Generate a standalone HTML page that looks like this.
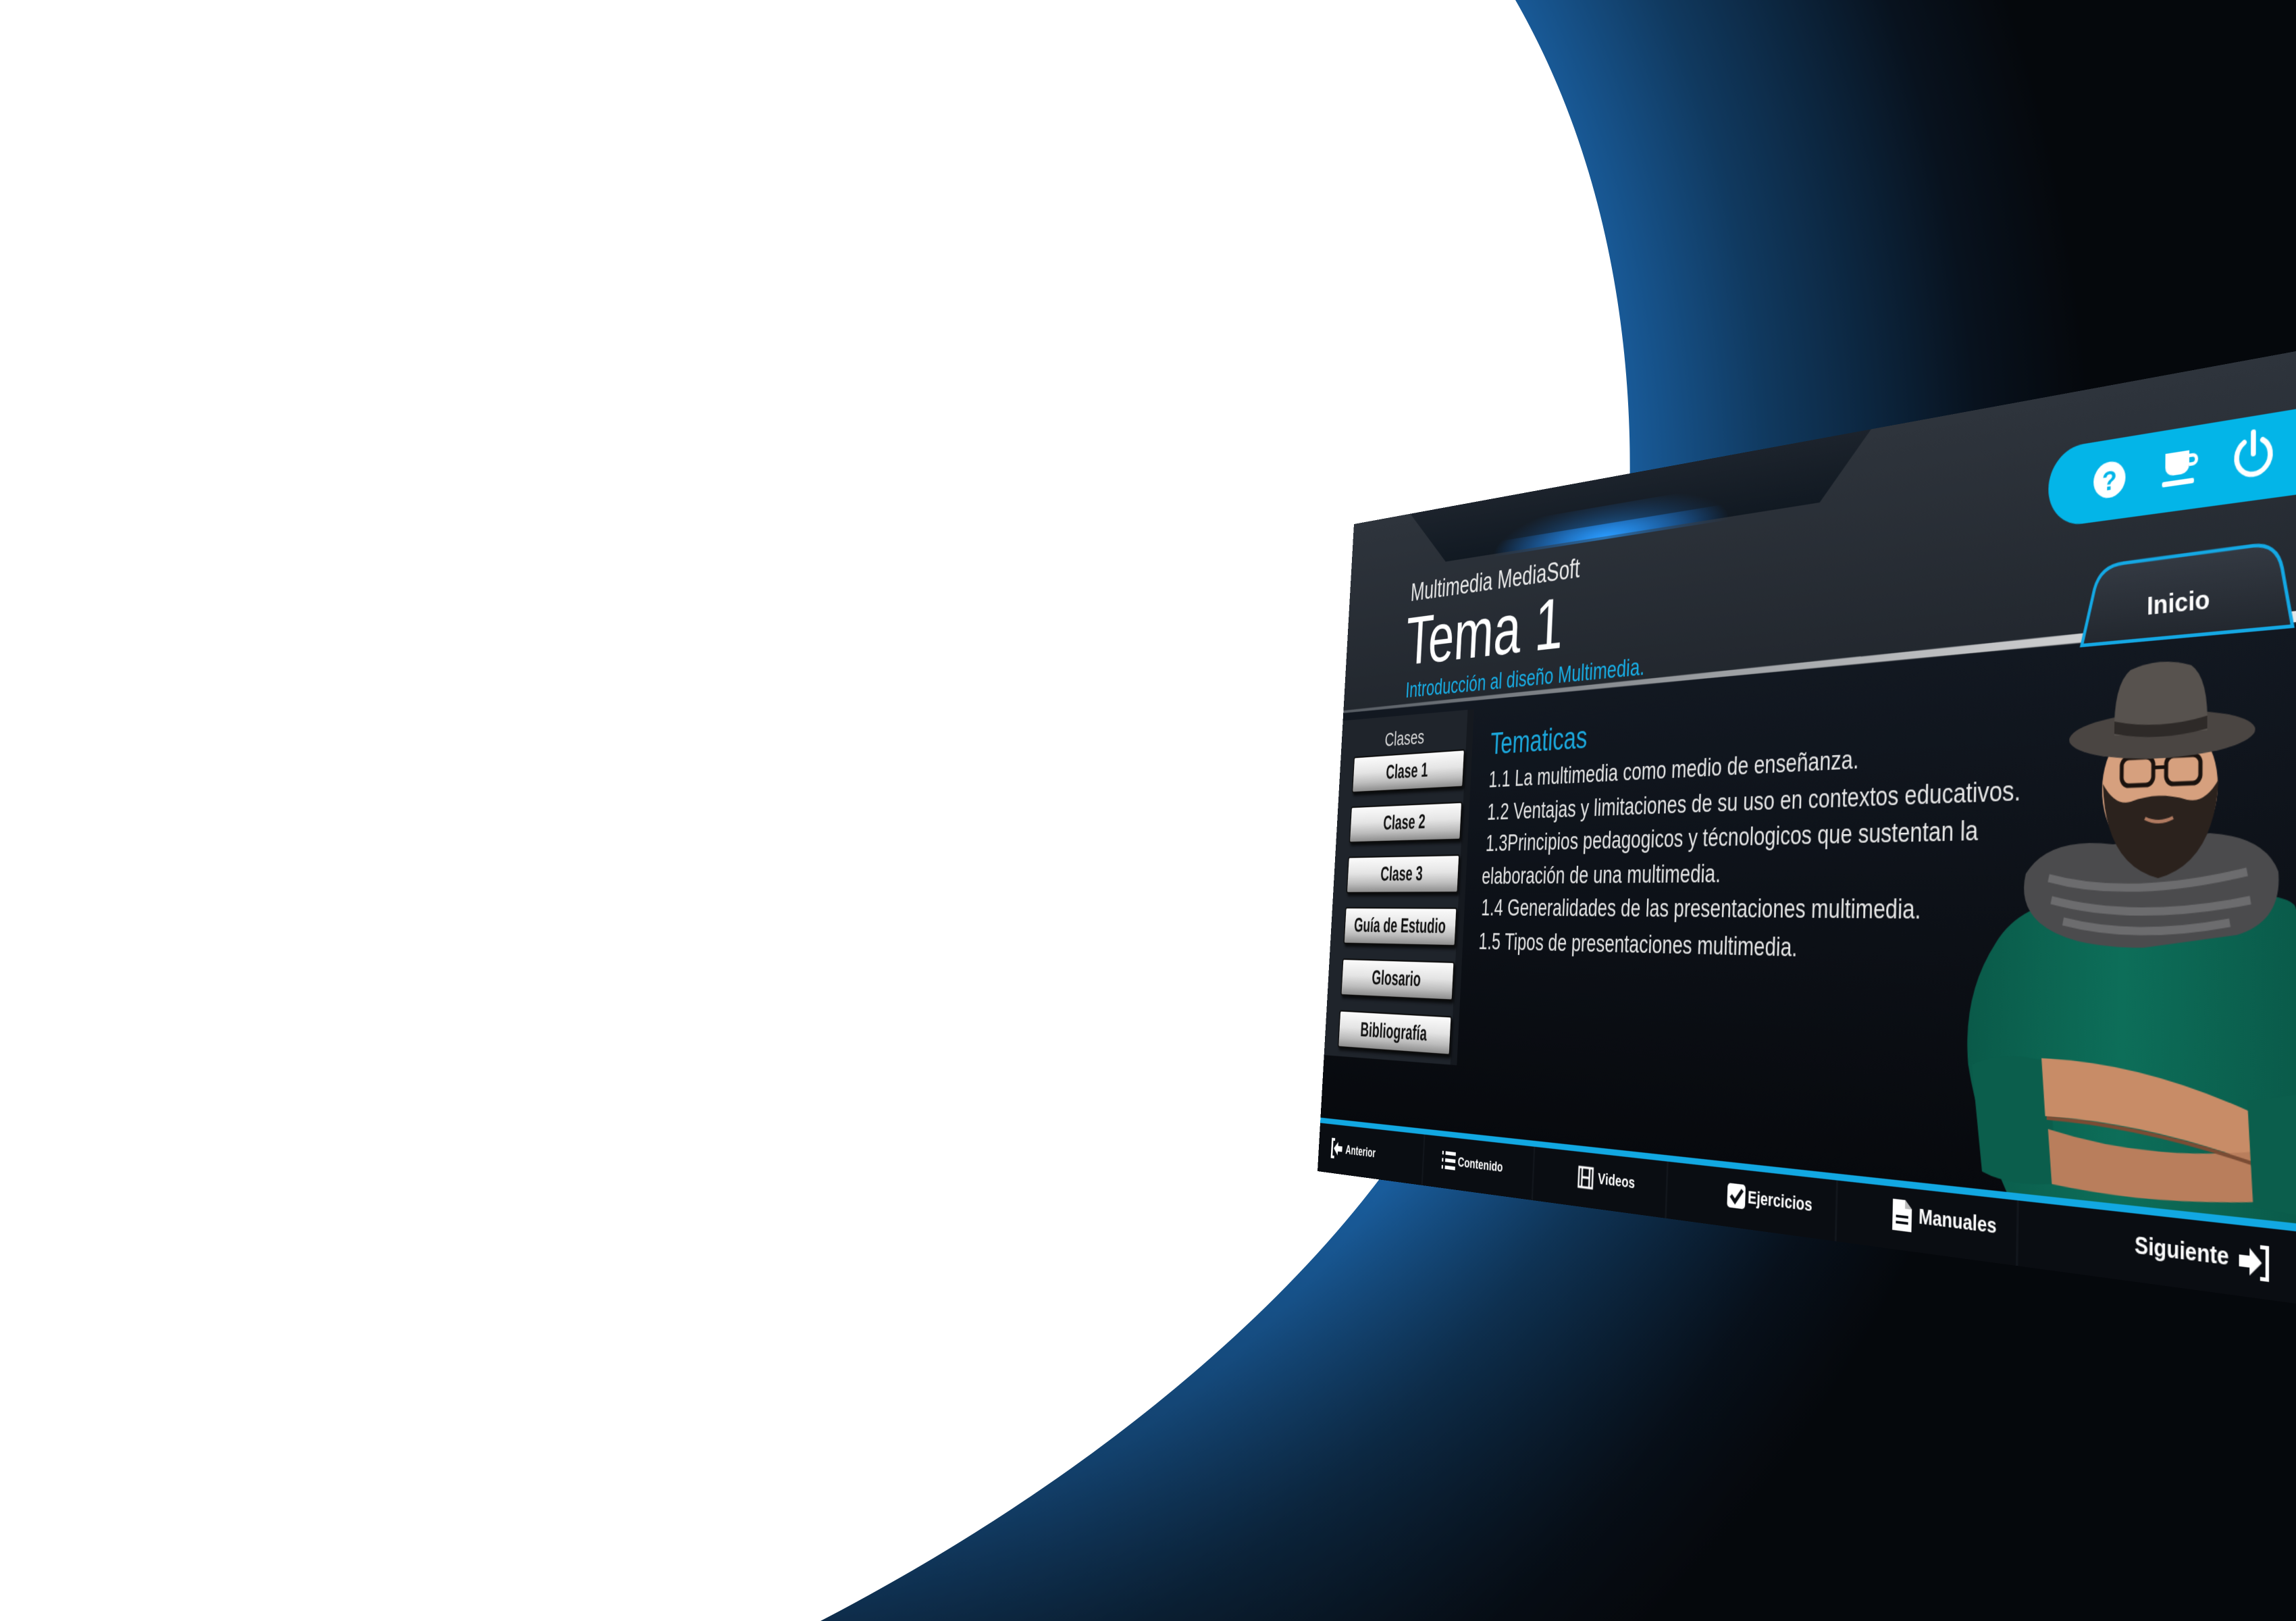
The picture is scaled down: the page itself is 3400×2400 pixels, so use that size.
<!DOCTYPE html>
<html><head><meta charset="utf-8">
<style>
*{margin:0;padding:0;box-sizing:border-box}
html,body{width:3400px;height:2400px;overflow:hidden;background:#fff}
#bg{position:absolute;left:0;top:0}
#scr{position:absolute;left:0;top:0;width:1600px;height:1000px;transform-origin:0 0;
transform:matrix3d(0.201669,-0.2625,0,-0.00019712, -0.12671,0.89338,0,-0.000037267, 0,0,1,0, 2005,776,0,1);
font-family:"Liberation Sans",sans-serif;overflow:hidden}
.t{position:absolute;white-space:nowrap;line-height:1}
.btn{position:absolute;left:32px;width:256px;height:56px;border:2px solid #0c0c0c;border-radius:4px;
background:linear-gradient(#fbfbfb 0%,#e4e4e4 45%,#bdbdbd 75%,#8e8e8e 100%);
box-shadow:3px 4px 4px rgba(0,0,0,.7);text-align:center;font-weight:bold;font-size:30px;line-height:52px;color:#111}
.btn span{display:inline-block;transform:scaleX(.92)}
.li{font-size:33px;color:#e6e6e6}
.nav{position:absolute;color:#fff;font-weight:bold;white-space:nowrap;line-height:1}
</style></head><body>
<svg id="bg" width="3400" height="2400" viewBox="0 0 3400 2400">
<defs>
<radialGradient id="rg" cx="700" cy="760" r="2400" gradientUnits="userSpaceOnUse">
<stop offset="0.70" stop-color="#1a60a2"/>
<stop offset="0.80" stop-color="#10395f"/>
<stop offset="0.93" stop-color="#08121e"/>
<stop offset="1" stop-color="#05080c"/>
</radialGradient>
<linearGradient id="lb" x1="0" y1="1700" x2="0" y2="2400" gradientUnits="userSpaceOnUse">
<stop offset="0" stop-color="#05080c" stop-opacity="0"/>
<stop offset="1" stop-color="#05080c" stop-opacity="0.55"/>
</linearGradient>
</defs>
<rect width="3400" height="2400" fill="url(#rg)"/>
<rect width="3400" height="2400" fill="url(#lb)"/>
<path d="M0,0 L2244,0 C2370,220 2420,480 2413,740 C2405,1150 2250,1500 2041,1748 C1880,1960 1600,2200 1215,2400 L0,2400 Z" fill="#ffffff"/>
</svg>

<div id="scr">
<svg width="1600" height="1000" viewBox="0 0 1600 1000" style="position:absolute;left:0;top:0">
<defs>
<linearGradient id="hd" x1="0" y1="0" x2="0" y2="1"><stop offset="0" stop-color="#2e343c"/><stop offset="1" stop-color="#22272e"/></linearGradient>
<linearGradient id="bd" x1="0" y1="0" x2="0" y2="1"><stop offset="0" stop-color="#121821"/><stop offset="1" stop-color="#07090d"/></linearGradient>
<linearGradient id="nt" x1="0" y1="0" x2="0" y2="1"><stop offset="0" stop-color="#1c232c"/><stop offset="1" stop-color="#111922"/></linearGradient>
<radialGradient id="gl" cx="560" cy="86" r="230" gradientUnits="userSpaceOnUse" gradientTransform="translate(560 86) scale(1 0.25) translate(-560 -86)">
<stop offset="0" stop-color="#2a9cff" stop-opacity="1"/><stop offset="1" stop-color="#1a6fd0" stop-opacity="0"/></radialGradient>
<linearGradient id="sep" x1="0" y1="0" x2="1" y2="0"><stop offset="0" stop-color="#555b62"/><stop offset="1" stop-color="#e6e6e6"/></linearGradient>
<linearGradient id="tab" x1="0" y1="0" x2="0" y2="1"><stop offset="0" stop-color="#343a43"/><stop offset="1" stop-color="#22272e"/></linearGradient>
<linearGradient id="sw" x1="0" y1="0" x2="1" y2="0"><stop offset="0" stop-color="#0a5a49"/><stop offset="0.5" stop-color="#0d6e59"/><stop offset="1" stop-color="#0a5b4a"/></linearGradient>
</defs>
<rect x="0" y="0" width="1600" height="300" fill="url(#hd)"/>
<polygon points="136,0 1024,0 944,84 224,84" fill="url(#nt)"/>
<polygon points="224,84 944,84 960,66 210,66" fill="url(#gl)"/>
<rect x="180" y="40" width="780" height="48" fill="url(#gl)" opacity="0.6"/>
<rect x="0" y="298" width="1600" height="630" fill="url(#bd)"/>
<polygon points="0,296 1600,284 1600,296 0,300" fill="url(#sep)"/>
<rect x="0" y="312" width="302" height="514" fill="#1f242b"/>
<rect x="290" y="312" width="14" height="514" fill="#15191f"/>
<rect x="1288" y="64" width="400" height="94" rx="47" fill="#03b5e8"/>
<circle cx="1370" cy="111" r="21" fill="#fff"/>
<text x="1370" y="123" text-anchor="middle" font-family="Liberation Sans" font-weight="bold" font-size="32" fill="#03b5e8">?</text>
<g transform="translate(1462 111)" fill="#fff">
<path d="M-20,-20 h30 v16 a10,10 0 0 1 -10,10 h-10 a10,10 0 0 1 -10,-10z"/>
<path d="M10,-16 h4 a7,7 0 0 1 0,14 h-4 v-4 h4 a3,3 0 0 0 0,-6 h-4z"/>
<rect x="-24" y="12" width="40" height="6" rx="2"/>
</g>
<g transform="translate(1550 108)" fill="none" stroke="#fff" stroke-width="6" stroke-linecap="round">
<path d="M-11,-16 A20,20 0 1 0 11,-16"/>
<line x1="0" y1="-26" x2="0" y2="-2"/>
</g>
<path d="M1336,300 L1352,236 Q1360,210 1390,210 L1550,208 Q1578,208 1584,236 L1596,300 Z" fill="url(#tab)" stroke="#14a8e4" stroke-width="4"/>

<path d="M1225,640 Q1255,596 1330,588 L1560,584 Q1600,588 1600,600 L1600,927 L1250,927 Q1205,850 1190,780 Q1180,700 1225,640 Z" fill="url(#sw)"/>
<path d="M1265,560 Q1295,518 1380,528 L1500,518 Q1565,523 1580,560 Q1585,612 1532,627 L1420,642 Q1325,644 1285,616 Q1256,595 1265,560 Z" fill="#4b4b4d"/>
<path d="M1296,565 Q1400,590 1544,560 M1300,590 Q1410,615 1548,590 M1316,614 Q1410,634 1524,614" stroke="#6c6c6e" stroke-width="9" fill="none"/>
<rect x="1400" y="500" width="74" height="45" fill="#c08a68"/>
<ellipse cx="1437" cy="466" rx="72" ry="82" fill="#d6a07e"/>
<path d="M1366,460 Q1370,550 1437,566 Q1505,550 1510,460 Q1494,486 1472,481 Q1437,470 1402,481 Q1382,486 1366,460 Z" fill="#2b221d"/>
<path d="M1420,500 Q1437,508 1455,500" stroke="#b07a60" stroke-width="4" fill="none"/>
<rect x="1390" y="432" width="40" height="31" rx="9" fill="none" stroke="#1a120e" stroke-width="5"/>
<rect x="1446" y="432" width="42" height="31" rx="9" fill="none" stroke="#1a120e" stroke-width="5"/>
<line x1="1430" y1="444" x2="1446" y2="444" stroke="#1a120e" stroke-width="4"/>
<ellipse cx="1437" cy="408" rx="116" ry="26" fill="#4a4542"/>
<path d="M1380,406 Q1378,348 1400,333 Q1437,320 1476,333 Q1498,348 1496,406 Z" fill="#57524e"/>
<path d="M1380,390 Q1437,403 1496,390 L1496,404 Q1437,416 1380,404 Z" fill="#2e2a28"/>
<path d="M1195,780 Q1240,760 1300,772 L1312,905 Q1250,914 1212,900 Z" fill="#0b5e4c"/>
<path d="M1290,768 Q1420,766 1552,812 L1552,862 Q1420,830 1296,832 Z" fill="#c88c67"/>
<path d="M1300,846 Q1430,872 1562,850 L1562,902 Q1430,918 1306,906 Z" fill="#b97e5c"/>
<path d="M1298,834 Q1420,834 1552,864" stroke="#7a4c34" stroke-width="4" fill="none"/>
<path d="M1545,800 L1600,790 L1600,912 L1552,908 Z" fill="#0b5e4c"/>

<rect x="0" y="926" width="1600" height="74" fill="#0a0d12"/>
<rect x="0" y="920" width="1600" height="8" fill="#12a8e2"/>
<g fill="#12161c"><rect x="240" y="928" width="3" height="72"/><rect x="470" y="928" width="3" height="72"/><rect x="720" y="928" width="3" height="72"/><rect x="1000" y="928" width="3" height="72"/><rect x="1260" y="928" width="3" height="72"/></g>
<g transform="translate(30 948)" fill="#fff">
<path d="M0,0 h8 v4 h-4 v22 h4 v4 h-8z"/>
<path d="M6,15 L16,5 V11 H26 V19 H16 V25 Z"/>
</g>
<g transform="translate(282 946)" fill="#fff">
<rect x="0" y="2" width="3" height="5"/><rect x="0" y="12" width="3" height="5"/><rect x="0" y="22" width="3" height="5"/>
<rect x="7" y="2" width="22" height="5"/><rect x="7" y="12" width="22" height="5"/><rect x="7" y="22" width="22" height="5"/>
</g>
<g transform="translate(560 948)" fill="none" stroke="#fff" stroke-width="3">
<rect x="0" y="0" width="26" height="26"/><line x1="6" y1="0" x2="6" y2="26"/><line x1="20" y1="0" x2="20" y2="26"/><line x1="6" y1="13" x2="20" y2="13"/>
</g>
<g transform="translate(826 946)">
<rect x="0" y="0" width="30" height="30" rx="5" fill="#fff"/>
<path d="M6,15 L13,22 L25,7" stroke="#0a0d12" stroke-width="5" fill="none"/>
</g>
<g transform="translate(1086 942)">
<path d="M0,0 H18 L28,10 V36 H0 Z" fill="#fff"/>
<path d="M18,0 V10 H28" fill="#bbb"/>
<rect x="5" y="18" width="18" height="3" fill="#0a0d12"/><rect x="5" y="25" width="18" height="3" fill="#0a0d12"/>
</g>
<g transform="translate(1536 946)" fill="#fff">
<path d="M0,12 H12 V4 L26,18 L12,32 V24 H0 Z"/>
<path d="M24,0 h10 v36 h-10 v-4 h6 v-28 h-6z"/>
</g>
</svg>

<div class="t" style="left:147px;top:106px;font-size:38px;color:#e9e9e9">Multimedia MediaSoft</div>
<div class="t" style="left:142px;top:148px;font-size:104px;color:#fff">Tema 1</div>
<div class="t" style="left:147px;top:257px;font-size:33px;color:#18aee6">Introducción al diseño Multimedia.</div>
<div class="t" style="left:1420px;top:248px;font-size:30px;color:#fff;font-weight:bold">Inicio</div>

<div class="t" style="left:0;width:300px;text-align:center;top:333px;font-size:30px;color:#d8d8d8">Clases</div>
<div class="btn" style="top:370px"><span>Clase 1</span></div>
<div class="btn" style="top:447px"><span>Clase 2</span></div>
<div class="btn" style="top:524px"><span>Clase 3</span></div>
<div class="btn" style="top:601px"><span>Guía de Estudio</span></div>
<div class="btn" style="top:679px"><span>Glosario</span></div>
<div class="btn" style="top:757px"><span>Bibliografía</span></div>

<div class="t" style="left:343px;top:344px;font-size:44px;color:#1ba7db">Tematicas</div>
<div class="t li" style="left:343px;top:400px">1.1 La multimedia como medio de enseñanza.</div>
<div class="t li" style="left:343px;top:447px">1.2 Ventajas y limitaciones de su uso en contextos educativos.</div>
<div class="t li" style="left:343px;top:492px">1.3Principios pedagogicos y técnologicos que sustentan la</div>
<div class="t li" style="left:338px;top:539px">elaboración de una multimedia.</div>
<div class="t li" style="left:340px;top:584px">1.4 Generalidades de las presentaciones multimedia.</div>
<div class="t li" style="left:338px;top:632px">1.5 Tipos de presentaciones multimedia.</div>

<div class="nav" style="left:64px;top:954px;font-size:18px">Anterior</div>
<div class="nav" style="left:316px;top:952px;font-size:19px">Contenido</div>
<div class="nav" style="left:596px;top:950px;font-size:21px">Videos</div>
<div class="nav" style="left:860px;top:950px;font-size:22px">Ejercicios</div>
<div class="nav" style="left:1124px;top:948px;font-size:24px">Manuales</div>
<div class="nav" style="left:1412px;top:950px;font-size:25px">Siguiente</div>
</div>
</body></html>
